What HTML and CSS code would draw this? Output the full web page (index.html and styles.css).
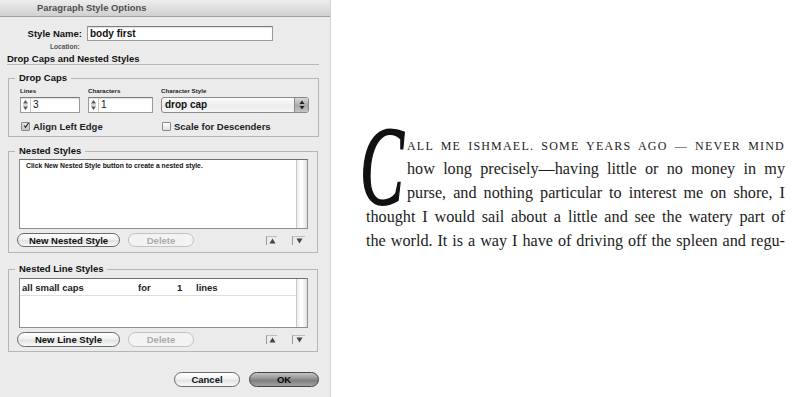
FILE: index.html
```html
<!DOCTYPE html>
<html>
<head>
<meta charset="utf-8">
<link rel="stylesheet" href="styles.css">
</head>
<body>
<div class="dialog">
  <div class="titlebar">Paragraph Style Options</div>
  <div class="content">
    <div class="name-row">
      <span class="name-label">Style Name:</span>
      <div class="field name-field">body first</div>
    </div>
    <div class="location">Location:</div>
    <div class="section-title">Drop Caps and Nested Styles</div>

    <fieldset class="group dropcaps">
      <legend>Drop Caps</legend>
      <div class="dc-grid">
        <span class="mini">Lines</span>
        <span class="mini">Characters</span>
        <span class="mini">Character Style</span>
        <div class="field step-field">
          <svg class="stepper" width="7" height="14" viewBox="0 0 7 14"><path d="M3.5 2 L6 5.5 L1 5.5 Z" fill="#555"/><line x1="1" y1="7" x2="6" y2="7" stroke="#999" stroke-width="0.8"/><path d="M3.5 12 L6 8.5 L1 8.5 Z" fill="#555"/></svg>
          <span class="val">3</span>
        </div>
        <div class="field step-field">
          <svg class="stepper" width="7" height="14" viewBox="0 0 7 14"><path d="M3.5 2 L6 5.5 L1 5.5 Z" fill="#555"/><line x1="1" y1="7" x2="6" y2="7" stroke="#999" stroke-width="0.8"/><path d="M3.5 12 L6 8.5 L1 8.5 Z" fill="#555"/></svg>
          <span class="val">1</span>
        </div>
        <div class="select">
          <span class="select-text">drop cap</span>
          <span class="select-btn"><svg width="6" height="10" viewBox="0 0 6 10"><path d="M3 0.5 L5.5 4 L0.5 4 Z" fill="#222"/><path d="M3 9.5 L5.5 6 L0.5 6 Z" fill="#222"/></svg></span>
        </div>
        <label class="check span2"><span class="box checked"><svg width="9" height="9" viewBox="0 0 9 9"><path d="M1.5 4.5 L3.8 7.2 L8.5 0.5" fill="none" stroke="#222" stroke-width="1.6"/></svg></span>Align Left Edge</label>
        <label class="check"><span class="box"></span>Scale for Descenders</label>
      </div>
    </fieldset>

    <fieldset class="group nested">
      <legend>Nested Styles</legend>
      <div class="listbox list-nested">
        <div class="list-body"><div class="hint">Click New Nested Style button to create a nested style.</div></div>
        <div class="scrollbar"></div>
      </div>
      <div class="btn-row">
        <span class="btn wide">New Nested Style</span>
        <span class="btn disabled">Delete</span>
        <span class="spacer"></span>
        <span class="arrow"><svg width="7" height="6" viewBox="0 0 7 6"><path d="M3.5 0.5 L6.5 5.5 L0.5 5.5 Z" fill="#444"/></svg></span>
        <span class="arrow"><svg width="7" height="6" viewBox="0 0 7 6"><path d="M3.5 5.5 L6.5 0.5 L0.5 0.5 Z" fill="#444"/></svg></span>
      </div>
    </fieldset>

    <fieldset class="group lines">
      <legend>Nested Line Styles</legend>
      <div class="listbox list-lines">
        <div class="list-body">
          <div class="row"><span class="c1">all small caps</span><span class="c2">for</span><span class="c3">1</span><span class="c4">lines</span></div>
        </div>
        <div class="scrollbar"></div>
      </div>
      <div class="btn-row">
        <span class="btn wide">New Line Style</span>
        <span class="btn disabled">Delete</span>
        <span class="spacer"></span>
        <span class="arrow"><svg width="7" height="6" viewBox="0 0 7 6"><path d="M3.5 0.5 L6.5 5.5 L0.5 5.5 Z" fill="#444"/></svg></span>
        <span class="arrow"><svg width="7" height="6" viewBox="0 0 7 6"><path d="M3.5 5.5 L6.5 0.5 L0.5 0.5 Z" fill="#444"/></svg></span>
      </div>
    </fieldset>

    <div class="footer">
      <span class="btn cancel">Cancel</span>
      <span class="btn ok">OK</span>
    </div>
  </div>
</div>

<main class="page">
  <div class="para">
    <span class="dropcap"><span class="dropcap-glyph">C</span></span>
    <div class="ln sc">ALL ME ISHMAEL. SOME YEARS AGO — NEVER MIND</div>
    <div class="ln">how long precisely—having little or no money in my</div>
    <div class="ln">purse, and nothing particular to interest me on shore, I</div>
    <div class="ln">thought I would sail about a little and see the watery part of</div>
    <div class="ln">the world. It is a way I have of driving off the spleen and regu-</div>
  </div>
</main>
</body>
</html>
```

FILE: styles.css
```css
* { box-sizing: border-box; margin: 0; padding: 0; }
html, body { height: 100%; }
body {
  width: 800px;
  height: 397px;
  display: flex;
  background: #fff;
  font-family: "Liberation Sans", Arial, sans-serif;
  overflow: hidden;
}

/* ---------- dialog ---------- */
.dialog {
  width: 331px;
  height: 397px;
  background: #ebebeb;
  border-right: 1px solid #d2d2d2;
  display: flex;
  flex-direction: column;
}
.titlebar {
  height: 17px;
  background: linear-gradient(#ededed, #d0d0d0);
  border-bottom: 1px solid #a0a0a0;
  font-size: 9.4px;
  font-weight: bold;
  color: #4f4f4f;
  line-height: 16px;
  padding-left: 37px;
}
.content {
  padding: 0 11px 0 8px;
  color: #111;
}
.name-row {
  display: flex;
  align-items: center;
  gap: 5px;
  margin-top: 9px;
}
.name-label {
  width: 74px;
  text-align: right;
  font-size: 9.5px;
  font-weight: bold;
}
.field {
  background: #fff;
  border: 1px solid #9a9a9a;
  border-top-color: #7c7c7c;
  box-shadow: inset 0 1px 1px rgba(0,0,0,0.12);
}
.name-field {
  width: 186px;
  height: 15px;
  font-size: 10px;
  font-weight: bold;
  line-height: 13px;
  padding-left: 2px;
}
.location {
  margin-top: 2px;
  padding-left: 42px;
  font-size: 6.6px;
  font-weight: bold;
  color: #555;
  line-height: 8px;
}
.section-title {
  margin-top: 3px;
  font-size: 9.5px;
  font-weight: bold;
  line-height: 10px;
  border-bottom: 1px solid #b8b8b8;
  margin-left: -1px;
}

/* ---------- groups ---------- */
.group {
  border: 1px solid #b6b6b6;
  margin-right: 1px;
  padding: 0 9px 0 11px;
}
.group legend {
  font-size: 9.5px;
  font-weight: bold;
  line-height: 10px;
  padding: 0 4px;
  margin-left: -5px;
}
.dropcaps { margin-top: 8px; padding-top: 4px; padding-bottom: 4px; }
.nested { margin-top: 9px; padding-top: 3px; padding-bottom: 5px; }
.lines { margin-top: 11px; padding-top: 4px; padding-bottom: 4px; }

.dc-grid {
  display: grid;
  grid-template-columns: 60px 65px 148px;
  column-gap: 8px;
}
.mini {
  font-size: 6.2px;
  font-weight: bold;
  line-height: 8px;
  margin-bottom: 2px;
  color: #222;
}
.step-field {
  height: 16px;
  display: flex;
  align-items: center;
}
.stepper {
  margin-left: 1px;
  border-right: 1px solid #c8c8c8;
  padding-right: 1px;
  box-sizing: content-box;
}
.val {
  font-size: 10px;
  margin-left: 2px;
  line-height: 14px;
}
.select {
  height: 16px;
  display: flex;
  align-items: stretch;
  border: 1px solid #8a8a8a;
  border-radius: 3px;
  background: linear-gradient(#fdfdfd, #ececec 55%, #f6f6f6);
  overflow: hidden;
}
.select-text {
  flex: 1;
  font-size: 10px;
  font-weight: bold;
  line-height: 14px;
  padding-left: 3px;
}
.select-btn {
  width: 14px;
  display: flex;
  align-items: center;
  justify-content: center;
  border-left: 1px solid #8a8a8a;
  background: linear-gradient(#d8d8d8, #a9a9a9 55%, #c4c4c4);
}
.check {
  margin-top: 7px;
  height: 12px;
  display: flex;
  align-items: center;
  font-size: 9.5px;
  font-weight: bold;
  color: #222;
}
.span2 { grid-column: span 2; }
.box {
  width: 9px;
  height: 9px;
  border: 1px solid #8a8a8a;
  border-radius: 1px;
  background: linear-gradient(#fff, #e0e0e0);
  margin: 0 3px 0 1px;
  display: inline-flex;
  align-items: center;
  justify-content: center;
}
.box.checked { background: linear-gradient(#e4e4e4, #c4c4c4); }
.box svg { margin-top: -2px; margin-left: 1px; }

/* ---------- list boxes ---------- */
.listbox {
  display: flex;
  margin-left: -1px;
  background: #fff;
  border: 1px solid #8e8e8e;
  border-top-color: #6e6e6e;
}
.list-nested { height: 70px; }
.list-lines { height: 50px; }
.list-body { flex: 1; }
.scrollbar {
  width: 11px;
  border-left: 1px solid #c6c6c6;
  background: linear-gradient(to right, #eeeeee, #ffffff 45%, #e4e4e4);
}
.hint {
  font-size: 6.8px;
  font-weight: bold;
  line-height: 8px;
  padding: 2px 0 0 6px;
  color: #111;
}
.row {
  height: 17px;
  border-bottom: 1px solid #dedede;
  display: flex;
  align-items: center;
  font-size: 9.5px;
  font-weight: bold;
  color: #222;
}
.c1 { margin-left: 2px; width: 116px; }
.c2 { width: 39px; }
.c3 { width: 19px; }

/* ---------- buttons ---------- */
.btn-row {
  display: flex;
  align-items: center;
  gap: 8px;
  margin-top: 4px;
  margin-left: -3px;
}
.btn {
  height: 14px;
  border: 1px solid #6a6a6a;
  border-radius: 8px;
  background: linear-gradient(#ffffff, #f1f1f1 45%, #e2e2e2 55%, #f9f9f9);
  font-size: 9.5px;
  font-weight: bold;
  color: #111;
  display: flex;
  align-items: center;
  justify-content: center;
}
.lines .btn { height: 15px; }
.btn.wide { width: 103px; }
.btn.disabled {
  width: 66px;
  border-color: #c2c2c2;
  color: #ababab;
  background: #f3f3f3;
}
.spacer { flex: 1; }
.arrow {
  width: 11px;
  height: 9px;
  border-left: 1px solid #9a9a9a;
  border-top: 1px solid #bdbdbd;
  display: flex;
  align-items: center;
  justify-content: center;
}
.arrow + .arrow { margin-left: 7px; width: 13px; margin-right: 3px; }

.footer {
  display: flex;
  justify-content: flex-end;
  gap: 9px;
  margin-top: 20px;
}
.btn.cancel { width: 66px; height: 15px; }
.btn.ok {
  width: 70px;
  height: 15px;
  border-color: #444;
  background: linear-gradient(#c4c4c4, #929292 45%, #7e7e7e 55%, #a2a2a2);
  color: #0a0a0a;
}

/* ---------- page text ---------- */
.page {
  flex: 1;
  padding: 133px 0 0 35px;
}
.para {
  width: 419px;
  font-family: "Liberation Serif", "Times New Roman", serif;
  font-size: 16.2px;
  line-height: 24px;
  color: #1c1c1c;
}
.dropcap {
  float: left;
  width: 41px;
  height: 72px;
}
.dropcap-glyph {
  display: block;
  height: 72px;
  font-style: italic;
  font-size: 113px;
  line-height: 72px;
  margin-top: -3px;
  margin-left: -6px;
  transform: scaleX(0.58);
  transform-origin: left center;
  -webkit-text-stroke: 2px #111;
  color: #111;
}
.ln {
  text-align: justify;
  text-align-last: justify;
}
.sc {
  font-variant-caps: all-small-caps;
  letter-spacing: 1.2px;
  font-size: 16.5px;
}
```
